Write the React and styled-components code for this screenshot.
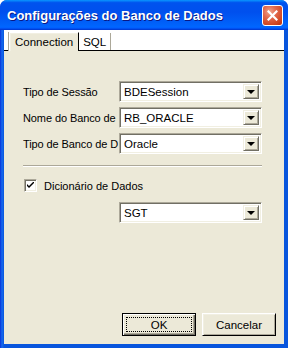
import React from 'react'
import styled, { createGlobalStyle } from 'styled-components'

const GlobalStyle = createGlobalStyle`
  html, body {
    margin: 0;
    padding: 0;
    background: #fff;
  }
  body {
    font-family: "Liberation Sans", Arial, sans-serif;
    font-size: 11px;
    color: #000;
  }
`

const Window = styled.div`
  width: 288px;
  height: 348px;
  display: flex;
  flex-direction: column;
  background: #0842d8;
  border-radius: 7px 7px 0 0;
  overflow: hidden;
  box-sizing: border-box;
`

const TitleBar = styled.div`
  height: 30px;
  flex: none;
  display: flex;
  align-items: center;
  justify-content: space-between;
  padding: 0 5px 0 7px;
  background: linear-gradient(180deg, #0997ff 0%, #0053ee 9%, #0050ee 40%, #0062fa 80%, #0066ff 90%, #005bff 94%, #003dd7 97%, #003dd7 100%);
`

const Title = styled.span`
  color: #fff;
  font-family: "Liberation Sans", Arial, sans-serif;
  font-weight: bold;
  font-size: 13px;
  text-shadow: 1px 1px #0a1883;
`

const CloseButton = styled.div`
  width: 19px;
  height: 19px;
  border: 1px solid #fff;
  border-radius: 3px;
  background: radial-gradient(circle at 35% 30%, #f0a58e 0%, #e26a4f 35%, #d1451f 75%, #b8300f 100%);
  display: flex;
  align-items: center;
  justify-content: center;
  margin-top: 1px;
`

const Frame = styled.div`
  flex: 1;
  display: flex;
  padding: 0 4px 4px 4px;
  background: linear-gradient(90deg, #0831d9 0px, #166aee 2px, #0855dd 4px);
  min-height: 0;
`

const Client = styled.div`
  flex: 1;
  display: flex;
  flex-direction: column;
  background: #ece9d8;
`

const TabStrip = styled.div`
  height: 21px;
  flex: none;
  display: flex;
  align-items: flex-end;
  background: #fff;
  border-bottom: 1px solid #000;
  padding-left: 5px;
  box-sizing: border-box;
`

const Tab = styled.div`
  height: ${p => (p.active ? '19px' : '17px')};
  padding: 0 ${p => (p.active ? '5px' : '4px')};
  display: flex;
  align-items: center;
  box-sizing: border-box;
  margin-bottom: ${p => (p.active ? '-1px' : '0')};
  background: ${p => (p.active ? '#ece9d8' : 'transparent')};
  border-left: ${p => (p.active ? '1px solid #fff' : '0')};
  border-top: ${p => (p.active ? '1px solid #fff' : '0')};
  border-right: 1px solid ${p => (p.active ? '#000' : '#aca899')};
  box-shadow: ${p => (p.active ? 'inset 1px 1px #f1efe2, -1px 0 #aca899' : 'none')};
  font-size: 11.5px;
`

const Content = styled.div`
  flex: 1;
  display: flex;
  flex-direction: column;
  padding: 30px 22px 8px 19px;
`

const Row = styled.div`
  display: flex;
  align-items: center;
  height: 21px;
  margin-bottom: 5px;
`

const Label = styled.span`
  width: 96px;
  flex: none;
  white-space: nowrap;
  overflow: hidden;
  letter-spacing: -0.1px;
`

const Combo = styled.div`
  width: 143px;
  height: 21px;
  box-sizing: border-box;
  display: flex;
  background: #fff;
  border-top: 1px solid #aca899;
  border-left: 1px solid #aca899;
  border-right: 1px solid #fff;
  border-bottom: 1px solid #fff;
  box-shadow: inset 1px 1px #716f64, inset -1px -1px #f1efe2;
  padding: 2px;
  margin-left: ${p => p.indent || 0}px;
`

const ComboText = styled.span`
  flex: 1;
  display: flex;
  align-items: center;
  padding-left: 2px;
  font-size: 11.5px;
`

const DropButton = styled.div`
  width: 16px;
  flex: none;
  box-sizing: border-box;
  background: #ece9d8;
  border-top: 1px solid #f1efe2;
  border-left: 1px solid #f1efe2;
  border-right: 1px solid #716f64;
  border-bottom: 1px solid #716f64;
  box-shadow: inset 1px 1px #fff, inset -1px -1px #aca899;
  display: flex;
  align-items: center;
  justify-content: center;
`

const Arrow = styled.div`
  width: 0;
  height: 0;
  border-left: 4px solid transparent;
  border-right: 4px solid transparent;
  border-top: 4px solid #000;
  margin-top: 1px;
`

const Separator = styled.div`
  height: 0;
  border-top: 1px solid #aca899;
  border-bottom: 1px solid #fff;
  margin: 6px 0 0 0;
`

const CheckRow = styled.div`
  display: flex;
  align-items: center;
  margin: 12px 0 0 1px;
  height: 13px;
`

const CheckBox = styled.div`
  width: 13px;
  height: 13px;
  box-sizing: border-box;
  background: #fff;
  border-top: 1px solid #aca899;
  border-left: 1px solid #aca899;
  border-right: 1px solid #fff;
  border-bottom: 1px solid #fff;
  box-shadow: inset 1px 1px #716f64, inset -1px -1px #f1efe2;
  display: flex;
  align-items: center;
  justify-content: center;
  margin-right: 7px;
`

const Footer = styled.div`
  margin-top: auto;
  display: flex;
  justify-content: flex-end;
  gap: 6px;
  margin-right: -14px;
`

const Button = styled.div`
  width: 74px;
  height: 23px;
  box-sizing: border-box;
  display: flex;
  align-items: center;
  justify-content: center;
  background: #ece9d8;
  position: relative;
  border: 1px solid #000;
  border-top-color: ${p => (p.primary ? '#000' : '#fff')};
  border-left-color: ${p => (p.primary ? '#000' : '#fff')};
  box-shadow: ${p => (p.primary
    ? 'inset 1px 1px #fff, inset -1px -1px #716f64, inset -2px -2px #aca899'
    : 'inset 1px 1px #f1efe2, inset -1px -1px #aca899')};
  font-size: 11.5px;
`

const Focus = styled.div`
  position: absolute;
  inset: 3px;
  border: 1px dotted #000;
`

const comboRows = [
  { label: 'Tipo de Sessão', value: 'BDESession' },
  { label: 'Nome do Banco de', value: 'RB_ORACLE' },
  { label: 'Tipo de Banco de D', value: 'Oracle' },
]

const ComboBox = ({ value, indent }) => (
  <Combo indent={indent}>
    <ComboText>{value}</ComboText>
    <DropButton><Arrow /></DropButton>
  </Combo>
)

export default function App () {
  return (
    <>
      <GlobalStyle />
      <Window>
        <TitleBar>
          <Title>Configurações do Banco de Dados</Title>
          <CloseButton>
            <svg width="11" height="11" viewBox="0 0 11 11">
              <path d="M1.5 1.5 L9.5 9.5 M9.5 1.5 L1.5 9.5" stroke="#fff" strokeWidth="2.2" strokeLinecap="square" />
            </svg>
          </CloseButton>
        </TitleBar>
        <Frame>
          <Client>
            <TabStrip>
              <Tab active>Connection</Tab>
              <Tab>SQL</Tab>
            </TabStrip>
            <Content>
              {comboRows.map(r => (
                <Row key={r.label}>
                  <Label>{r.label}</Label>
                  <ComboBox value={r.value} />
                </Row>
              ))}
              <Separator />
              <CheckRow>
                <CheckBox>
                  <svg width="7" height="7" viewBox="0 0 7 7">
                    <path d="M0 2 L0 4 L2 6 L7 1 L7 -1 L2 4 Z" fill="#000" />
                  </svg>
                </CheckBox>
                <span>Dicionário de Dados</span>
              </CheckRow>
              <Row style={{ marginTop: 10 }}>
                <ComboBox value="SGT" indent={96} />
              </Row>
              <Footer>
                <Button primary>OK<Focus /></Button>
                <Button>Cancelar</Button>
              </Footer>
            </Content>
          </Client>
        </Frame>
      </Window>
    </>
  )
}
